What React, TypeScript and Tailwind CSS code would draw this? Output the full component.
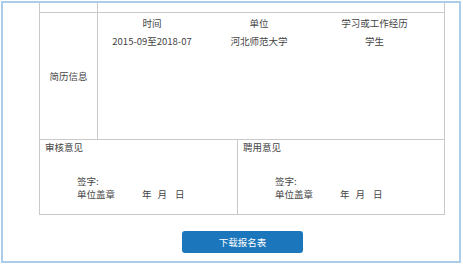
import React from "react";

const font = { fontFamily: '"Noto Sans CJK SC", "Noto Sans", sans-serif' };

function SignBlock({ title }: { title: string }) {
  return (
    <div className="flex flex-col pl-[5px] pt-[1px]">
      <div className="h-[12px] leading-[12px]">{title}</div>
      <div className="pl-[32px] pt-[22px]">
        <div className="h-[13px] leading-[12px]">签字:</div>
        <div className="flex h-[12px] leading-[12px]">
          <span className="w-[65px]">单位盖章</span>
          <span>年</span>
          <span className="ml-[6px]">月</span>
          <span className="ml-[8px]">日</span>
        </div>
      </div>
    </div>
  );
}

export default function App() {
  return (
    <div className="w-[463px] h-[265px] bg-white overflow-hidden text-[#444] text-[9.5px]" style={font}>
      <div className="ml-[1px] mt-[1px] w-[460px] h-[262px] border-2 border-[#abcde9] overflow-hidden">
        <div className="ml-[36px] w-[406px] border-x border-b border-[#c9c9c9]">
          {/* top row, partly scrolled out of view */}
          <div className="flex h-[10px] border-b border-[#c9c9c9]">
            <div className="w-[58px] border-r border-[#c9c9c9]" />
            <div className="flex-1" />
          </div>

          {/* resume row */}
          <div className="flex h-[127px] border-b border-[#c9c9c9]">
            <div className="w-[58px] border-r border-[#c9c9c9] flex items-center justify-center">
              简历信息
            </div>
            <div className="flex-1 pt-[4px]">
              <div className="grid grid-cols-[108px_106px_125px] text-center leading-[12px]">
                <div>时间</div>
                <div>单位</div>
                <div>学习或工作经历</div>
              </div>
              <div className="grid grid-cols-[108px_106px_125px] text-center leading-[12px] mt-[6px]">
                <div>2015-09至2018-07</div>
                <div>河北师范大学</div>
                <div>学生</div>
              </div>
            </div>
          </div>

          {/* review row */}
          <div className="flex h-[74px]">
            <div className="w-[198px] border-r border-[#c9c9c9]">
              <SignBlock title="审核意见" />
            </div>
            <div className="flex-1">
              <SignBlock title="聘用意见" />
            </div>
          </div>
        </div>

        <div className="flex justify-center pl-[23px] mt-[16px]">
          <button className="w-[121px] h-[22px] rounded-[3px] bg-[#1b76bb] text-white text-[9.5px] leading-[22px]">
            下载报名表
          </button>
        </div>
      </div>
    </div>
  );
}
